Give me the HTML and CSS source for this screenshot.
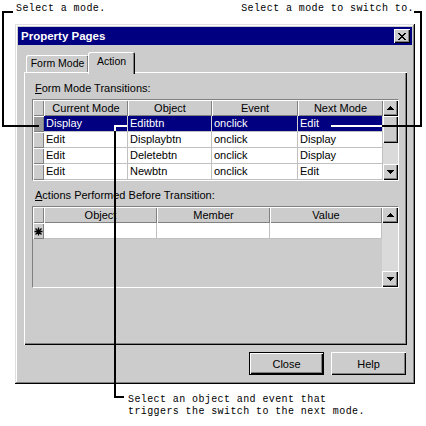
FILE: index.html
```html
<!DOCTYPE html>
<html>
<head>
<meta charset="utf-8">
<title>Property Pages</title>
<link rel="stylesheet" href="styles.css">
</head>
<body>
<div class="top-notes">
  <span class="note">Select a mode.</span>
  <span class="note">Select a mode to switch to.</span>
</div>

<div class="dialog">
  <div class="titlebar">
    <span class="title">Property Pages</span>
    <span class="xbtn">
      <svg width="8" height="7" viewBox="0 0 8 7" shape-rendering="crispEdges"><path fill="#000" d="M0 0h2v1H0z M6 0h2v1H6z M1 1h2v1H1z M5 1h2v1H5z M2 2h4v1H2z M3 3h2v1H3z M2 4h4v1H2z M1 5h2v1H1z M5 5h2v1H5z M0 6h2v1H0z M6 6h2v1H6z"/></svg>
    </span>
  </div>
  <div class="dlg-body">
    <div class="tabs">
      <div class="tab form">Form Mode</div>
      <div class="tab active">Action</div>
    </div>
    <div class="panel">
      <div class="label"><u>F</u>orm Mode Transitions:</div>
      <div class="grid g1">
        <div class="sb">
          <div class="sbtn"><svg width="7" height="4" viewBox="0 0 7 4" shape-rendering="crispEdges"><path d="M3 0h1v1H3z M2 1h3v1H2z M1 2h5v1H1z M0 3h7v1H0z"/></svg></div>
          <div class="thumb"></div>
          <div class="track"></div>
          <div class="sbtn"><svg width="7" height="4" viewBox="0 0 7 4" shape-rendering="crispEdges"><path d="M0 0h7v1H0z M1 1h5v1H1z M2 2h3v1H2z M3 3h1v1H3z"/></svg></div>
        </div>
        <div class="s"></div><div class="h">Current Mode</div><div class="h">Object</div><div class="h">Event</div><div class="h">Next Mode</div>
        <div class="s cur"></div><div class="c on">Display</div><div class="c on">Editbtn</div><div class="c on">onclick</div><div class="c on">Edit</div>
        <div class="s"></div><div class="c">Edit</div><div class="c">Displaybtn</div><div class="c">onclick</div><div class="c">Display</div>
        <div class="s"></div><div class="c">Edit</div><div class="c">Deletebtn</div><div class="c">onclick</div><div class="c">Display</div>
        <div class="s"></div><div class="c">Edit</div><div class="c">Newbtn</div><div class="c">onclick</div><div class="c">Edit</div>
      </div>
      <div class="label l2"><u>A</u>ctions Performed Before Transition:</div>
      <div class="grid g2">
        <div class="sb">
          <div class="sbtn"><svg width="7" height="4" viewBox="0 0 7 4" shape-rendering="crispEdges"><path d="M3 0h1v1H3z M2 1h3v1H2z M1 2h5v1H1z M0 3h7v1H0z"/></svg></div>
          <div class="track"></div>
          <div class="sbtn"><svg width="7" height="4" viewBox="0 0 7 4" shape-rendering="crispEdges"><path d="M0 0h7v1H0z M1 1h5v1H1z M2 2h3v1H2z M3 3h1v1H3z"/></svg></div>
        </div>
        <div class="s"></div><div class="h">Object</div><div class="h">Member</div><div class="h">Value</div>
        <div class="s star"><svg width="9" height="9" viewBox="0 0 9 9"><path d="M4.5 0.5V8.5 M0.5 4.5H8.5 M1.5 1.5L7.5 7.5 M7.5 1.5L1.5 7.5" stroke="#000" stroke-width="1.3" fill="none"/></svg></div><div class="c"></div><div class="c"></div><div class="c last"></div>
      </div>
    </div>
    <div class="buttons">
      <div class="btn default">Close</div>
      <div class="btn">Help</div>
    </div>
  </div>
</div>

<div class="caption">Select an object and event that<br>triggers the switch to the next mode.</div>

<div class="ln la1"></div>
<div class="ln la2"></div>
<div class="ln la3"></div>
<div class="ln lb1"></div>
<div class="ln lb2"></div>
<div class="ln lb3"></div>
<div class="ln lb4 w"></div>
<div class="ln lc1 w"></div>
<div class="ln lc2 w"></div>
<div class="ln lc3"></div>
<div class="ln lc4"></div>
</body>
</html>
```
FILE: styles.css
```css
* { box-sizing: border-box; }
html, body { margin: 0; padding: 0; background: #fff; }
body {
  width: 426px; height: 426px; position: relative; overflow: hidden;
  font-family: "Liberation Sans", Arial, sans-serif; font-size: 11px; color: #000;
}
.top-notes {
  display: flex; justify-content: space-between;
  height: 24px; padding: 3px 12px 0 16px;
}
.note, .caption {
  font-family: "Liberation Mono", "DejaVu Sans Mono", monospace;
  font-size: 10px; letter-spacing: 0.4px; line-height: 12px;
}
.caption { margin: 10px 0 0 128px; }

.dialog {
  margin-left: 15px; width: 400px; height: 360px; padding: 3px;
  background: #cccccc;
  box-shadow: inset -1px -1px #000, inset 1px 1px #dfdfdf, inset -2px -2px #808080, inset 2px 2px #fff;
  display: flex; flex-direction: column;
}
.titlebar {
  height: 18px; background: #000080; color: #fff;
  display: flex; align-items: center; justify-content: space-between;
  padding: 0 2px 0 3px; font-weight: bold; font-size: 11.5px;
}
.xbtn {
  width: 16px; height: 14px; background: #cccccc;
  box-shadow: inset 1px 1px #fff, inset -1px -1px #000, inset -2px -2px #808080;
  display: flex; align-items: center; justify-content: center;
}
.dlg-body { padding: 7px 5px 0 6px; display: flex; flex-direction: column; }

.tabs { display: flex; align-items: flex-end; height: 20px; position: relative; z-index: 1; }
.tab {
  height: 17px; text-align: center; line-height: 17px; background: #cccccc;
  box-shadow: inset 1px 1px #fff, inset -1px 0 #000, inset -2px 0 #808080;
  border-radius: 2px 2px 0 0; font-size: 10.5px;
}
.tab.form { width: 63px; margin-left: 2px; }
.tab.active { width: 47px; height: 22px; margin-left: -1px; margin-bottom: -2px; line-height: 19px; }

.panel {
  height: 273px; padding: 10px 7px 0 8px;
  box-shadow: inset 1px 1px #fff, inset -1px -1px #000, inset -2px -2px #808080;
}
.label { padding-left: 3px; line-height: 13px; margin-bottom: 4px; }
.label.l2 { margin-top: 8px; }

.grid {
  display: grid; width: 367px; height: 82px;
  border: 1px solid; border-color: #808080 #fff #fff #808080;
  background: #cccccc;
}
.g1 { grid-template-columns: 11px 84px 84px 86px 85px 15px; grid-template-rows: repeat(5, 16px); }
.g2 { grid-template-columns: 11px 113px 113px 112px 16px; grid-template-rows: 16px 16px 1fr; }

.h {
  text-align: center; line-height: 16px; white-space: nowrap; overflow: hidden;
  box-shadow: inset 1px 1px #fff, inset -1px -1px #808080;
}
.s { background: #cccccc; box-shadow: inset 1px 1px #fff, inset -1px -1px #808080; }
.s.cur { background: #9c9c9c; }
.s.star { display: flex; align-items: center; justify-content: center; }
.c {
  background: #fff; border-right: 1px solid #c0c0c0; border-bottom: 1px solid #c0c0c0;
  padding-left: 2px; line-height: 15px; white-space: nowrap; overflow: hidden;
}
.c.on { background: #000080; color: #fff; border-right-color: #d0d0d0; }

.sb { grid-column: 6; grid-row: 1 / 6; display: flex; flex-direction: column; background: #dadada; }
.g2 .sb { grid-column: 5; grid-row: 1 / 4; }
.sbtn, .thumb {
  background: #cccccc;
  box-shadow: inset 1px 1px #fff, inset -1px -1px #000, inset -2px -2px #808080;
}
.sbtn { height: 16px; display: flex; align-items: center; justify-content: center; }
.thumb { height: 27px; }
.track { flex: 1; }

.buttons { display: flex; justify-content: flex-end; gap: 7px; margin-top: 7px; padding-right: 1px; }
.btn {
  width: 75px; height: 23px; display: flex; align-items: center; justify-content: center;
  box-shadow: inset 1px 1px #fff, inset -1px -1px #000, inset -2px -2px #808080;
}
.btn.default {
  box-shadow: inset 0 0 0 1px #000, inset 2px 2px #fff, inset -2px -2px #000, inset -3px -3px #808080;
}

/* callout lines */
.ln { position: absolute; background: #000; z-index: 5; }
.ln.w { background: #fff; }
.la1 { left: 2px; top: 11px; width: 11px; height: 2px; }
.la2 { left: 2px; top: 11px; width: 2px; height: 116px; }
.la3 { left: 2px; top: 125px; width: 37px; height: 2px; }
.lb1 { left: 414px; top: 11px; width: 8px; height: 2px; }
.lb2 { left: 420px; top: 11px; width: 2px; height: 116px; }
.lb3 { left: 382px; top: 125px; width: 40px; height: 2px; }
.lb4 { left: 331px; top: 125px; width: 51px; height: 2px; }
.lc1 { left: 114px; top: 125px; width: 13px; height: 2px; }
.lc2 { left: 114px; top: 125px; width: 2px; height: 6px; }
.lc3 { left: 114px; top: 131px; width: 2px; height: 267px; }
.lc4 { left: 114px; top: 396px; width: 10px; height: 2px; }
```
